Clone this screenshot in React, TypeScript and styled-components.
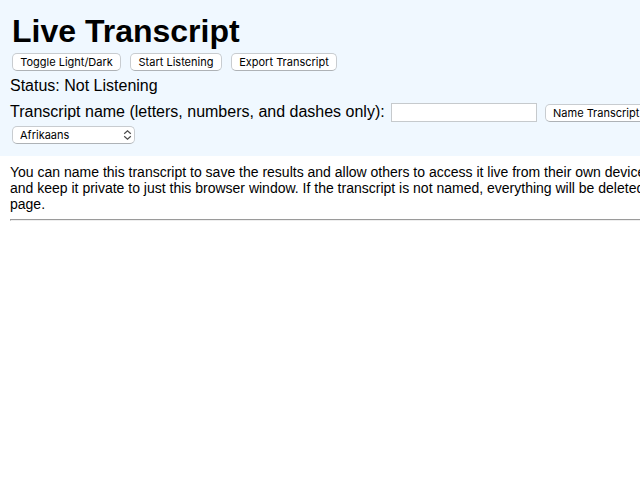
import React, { useState } from "react";
import styled, { createGlobalStyle } from "styled-components";

const GlobalStyle = createGlobalStyle`
  body {
    margin: 0;
    overflow-x: hidden;
    background: #fff;
    color: #000;
    font-family: "Liberation Sans", Arial, sans-serif;
  }
`;

const Header = styled.header`
  display: flex;
  flex-direction: column;
  align-items: flex-start;
  padding: 13px 0 12px 12px;
  background: #f0f8ff;
`;

const Title = styled.h1`
  margin: 0 0 3px;
  font-size: 32px;
  line-height: 37px;
`;

const Actions = styled.div`
  display: flex;
  gap: 9px;
`;

const Button = styled.button<{ $width: number }>`
  flex: none;
  box-sizing: border-box;
  width: ${(p) => p.$width}px;
  height: 18px;
  padding: 0;
  border: 1px solid #c8ccd0;
  border-bottom-color: #aeb2b6;
  border-radius: 5px;
  background: #fff;
  color: #000;
  font: 11px/16px "Inter", sans-serif;
  white-space: nowrap;
`;

const Status = styled.p`
  margin: 5px 0 8px -2px;
  font-size: 16px;
  line-height: 19px;
`;

const NameForm = styled.form`
  display: flex;
  align-items: center;
  margin: 0 0 4px -2px;
  font-size: 16px;
  white-space: nowrap;
`;

const NameLabel = styled.label`
  align-self: flex-start;
  line-height: 17px;
`;

const NameInput = styled.input`
  flex: none;
  box-sizing: border-box;
  width: 146px;
  height: 19px;
  margin: 0 8px 0 6px;
  border: 1px solid #c6cacd;
  background: #fff;
`;

const SelectWrap = styled.div`
  display: grid;
  width: 123px;

  > * {
    grid-area: 1 / 1;
  }

  svg {
    justify-self: end;
    align-self: center;
    margin-right: 3px;
    pointer-events: none;
  }
`;

const LanguageSelect = styled.select`
  appearance: none;
  box-sizing: border-box;
  width: 100%;
  height: 18px;
  padding: 0 18px 0 7px;
  border: 1px solid #c8ccd0;
  border-bottom-color: #aeb2b6;
  border-radius: 5px;
  background: #fff;
  color: #000;
  font: 11px/16px "Inter", sans-serif;
`;

const Notice = styled.main`
  padding: 8px 0 0 10px;
  font-size: 14px;
  line-height: 16px;
`;

const Line = styled.span`
  display: block;
  white-space: nowrap;
`;

const Rule = styled.hr`
  margin: 7px 0 0;
  border: solid;
  border-width: 1px 0 1px 1px;
  border-color: #9a9a9a #eee #eee #9a9a9a;
`;

export default function App() {
  const [language, setLanguage] = useState("Afrikaans");
  return (
    <>
      <GlobalStyle />
      <Header>
        <Title>Live Transcript</Title>
        <Actions>
          <Button type="button" $width={109}>Toggle Light/Dark</Button>
          <Button type="button" $width={92}>Start Listening</Button>
          <Button type="button" $width={106}>Export Transcript</Button>
        </Actions>
        <Status>Status: Not Listening</Status>
        <NameForm onSubmit={(e) => e.preventDefault()}>
          <NameLabel htmlFor="name">Transcript name (letters, numbers, and dashes only):</NameLabel>
          <NameInput id="name" type="text" />
          <Button type="submit" $width={103}>Name Transcript</Button>
        </NameForm>
        <SelectWrap>
          <LanguageSelect aria-label="Language" value={language} onChange={(e) => setLanguage(e.target.value)}>
            <option>Afrikaans</option>
            <option>English</option>
          </LanguageSelect>
          <svg width="9" height="12" viewBox="0 0 9 12" fill="none" stroke="#4a4a4a" strokeWidth="1.2">
            <path d="M1.200 4.800 4.500 1.800 7.800 4.800M1.200 7.200 4.500 10.200 7.800 7.200" />
          </svg>
        </SelectWrap>
      </Header>
      <Notice>
        <Line>You can name this transcript to save the results and allow others to access it live from their own devices, or leave it unnamed</Line>
        <Line>and keep it private to just this browser window. If the transcript is not named, everything will be deleted when you leave this</Line>
        <Line>page.</Line>
        <Rule />
      </Notice>
    </>
  );
}
